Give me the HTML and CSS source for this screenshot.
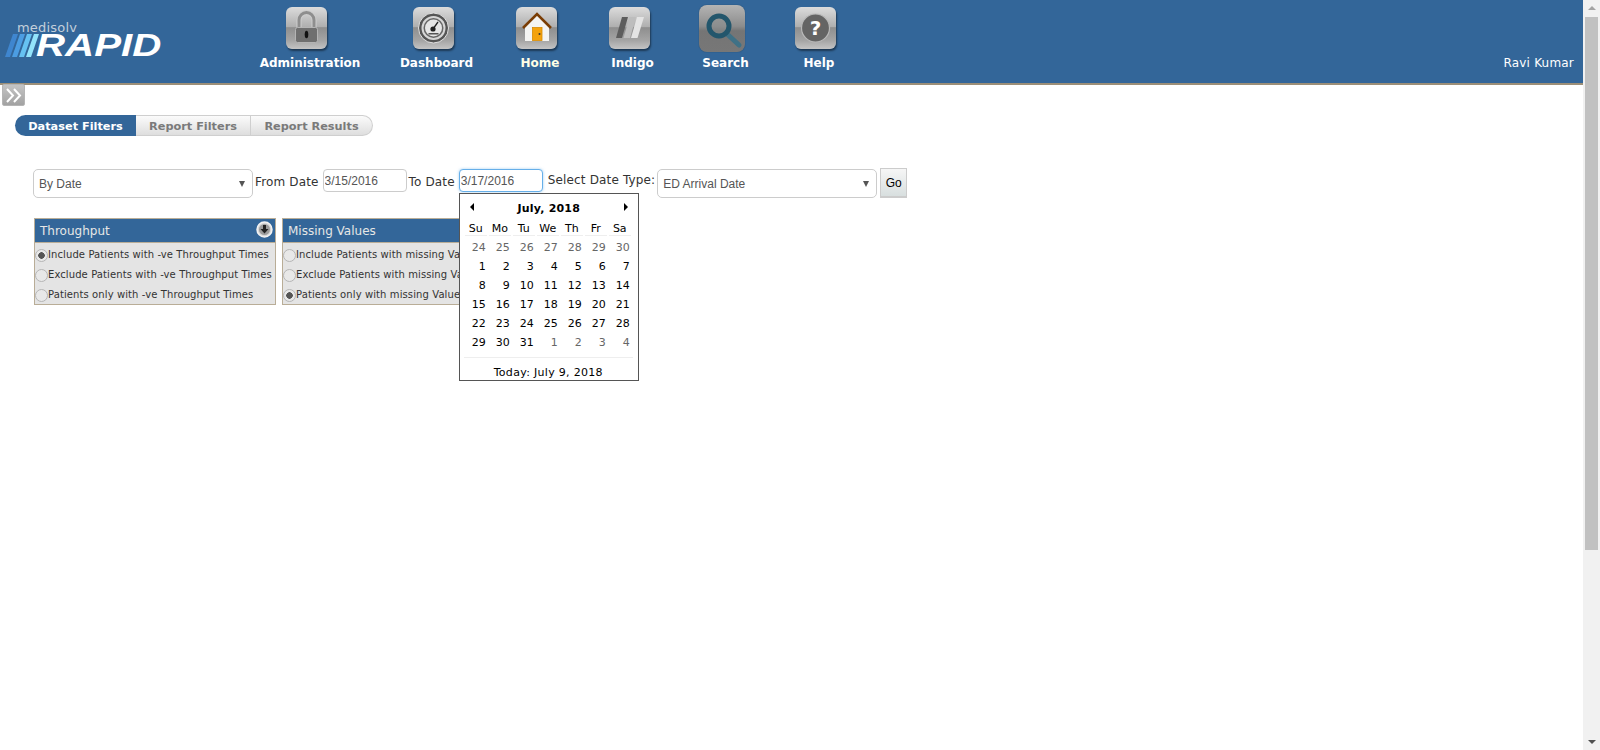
FILE: index.html
```html
<!DOCTYPE html>
<html lang="en">
<head>
    <meta charset="UTF-8">
    <title>Medisolv RAPID</title>
    <link rel="stylesheet" href="styles.css">
</head>
<body>
<div class="page">
    <div class="main">
        <header class="top-bar">
            <div class="logo">
                <span class="logo-small">medisolv</span>
                <div class="logo-mark">
                    <svg class="logo-stripes" width="34" height="23" viewBox="0 0 34 23">
                        <polygon points="8,0 13,0 5,23 0,23" fill="#3f86cf"/>
                        <polygon points="15,0 20,0 12,23 7,23" fill="#4c9de2"/>
                        <polygon points="22,0 27,0 19,23 14,23" fill="#66c2f2"/>
                        <polygon points="29,0 34,0 26,23 21,23" fill="#93e4fb"/>
                    </svg>
                    <span class="logo-big">RAPID</span>
                </div>
            </div>
            <nav class="nav">
                <a class="nav-item">
                    <span class="tile">
                        <svg width="41" height="42" viewBox="0 0 41 42">
                            <path d="M13 21 V13 a7.5 7.5 0 0 1 15 0 V21" fill="none" stroke="#cdcdcd" stroke-width="5"/>
                            <path d="M13 21 V13 a7.5 7.5 0 0 1 15 0 V21" fill="none" stroke="#8e8e8e" stroke-width="3"/>
                            <rect x="9.5" y="20.5" width="22" height="15" rx="2" fill="#6f6f6f" stroke="#b4b4b4"/>
                            <ellipse cx="20.5" cy="27.5" rx="1.8" ry="3.8" fill="#111"/>
                        </svg>
                    </span>
                    <span class="nav-label">Administration</span>
                </a>
                <a class="nav-item">
                    <span class="tile">
                        <svg width="41" height="42" viewBox="0 0 41 42">
                            <circle cx="20.5" cy="21" r="15" fill="#555" stroke="#e2e2e2" stroke-width="1"/>
                            <circle cx="20.5" cy="21" r="12" fill="#d6d6d6"/>
                            <circle cx="20.5" cy="21" r="10" fill="#666"/>
                            <circle cx="20.5" cy="21" r="8.5" fill="#e6e6e6"/>
                            <path d="M20 22 L25 15" stroke="#222" stroke-width="1.3"/>
                            <circle cx="20" cy="22" r="2.6" fill="#222"/>
                            <rect x="15.5" y="26" width="10" height="1.5" fill="#555"/>
                        </svg>
                    </span>
                    <span class="nav-label">Dashboard</span>
                </a>
                <a class="nav-item nav-home">
                    <span class="tile">
                        <svg width="41" height="42" viewBox="0 0 41 42">
                            <path d="M9 20 L21 8 L33 20 V34 H9 Z" fill="#f4f4f2"/>
                            <path d="M7 21 L21 7 L35 21" fill="none" stroke="#7a3d05" stroke-width="2.6"/>
                            <rect x="16.5" y="20.5" width="9.5" height="13" fill="#f4a20c" stroke="#d88a00" stroke-width="0.8"/>
                            <circle cx="23.5" cy="27" r="1" fill="#333"/>
                        </svg>
                    </span>
                    <span class="nav-label">Home</span>
                </a>
                <a class="nav-item">
                    <span class="tile">
                        <svg width="41" height="42" viewBox="0 0 41 42">
                            <polygon points="13,10 19,10 13,31 7,31" fill="#5d5d5d"/>
                            <polygon points="20.5,10 27,10 21,31 14.5,31" fill="#bdbdbd"/>
                            <polygon points="28,10 35,10 28.5,31 22,31" fill="#e4e4e4"/>
                        </svg>
                    </span>
                    <span class="nav-label">Indigo</span>
                </a>
                <a class="nav-item">
                    <span class="tile tile-active">
                        <svg width="46" height="47" viewBox="0 0 46 47">
                            <path d="M27 28 L40 40" stroke="#3f7186" stroke-width="5" stroke-linecap="round"/>
                            <circle cx="20" cy="21" r="10" fill="#8a8f90" fill-opacity="0.5" stroke="#23566c" stroke-width="5"/>
                        </svg>
                    </span>
                    <span class="nav-label">Search</span>
                </a>
                <a class="nav-item">
                    <span class="tile">
                        <svg class="help-ring" width="41" height="42" viewBox="0 0 41 42">
                            <circle cx="20.5" cy="21" r="14" fill="#646464" stroke="#b9b9b9" stroke-width="1.2"/>
                        </svg>
                        <span class="help-mark">?</span>
                    </span>
                    <span class="nav-label">Help</span>
                </a>
            </nav>
            <div class="user-name">Ravi Kumar</div>
        </header>

        <button class="expand-btn" type="button">
            <svg width="19" height="17" viewBox="0 0 19 17">
                <path d="M2 2 L8 8.5 L2 15 M9 2 L15 8.5 L9 15" fill="none" stroke="#fff" stroke-width="2"/>
            </svg>
        </button>

        <div class="tabs">
            <div class="tab tab-active">Dataset Filters</div>
            <div class="tab tab-mid">Report Filters</div>
            <div class="tab tab-last">Report Results</div>
        </div>

        <div class="filter-row">
            <div class="select-box select-first"><select><option>By Date</option></select></div>
            <label class="filter-label label-from">From Date</label>
            <input class="date-input" type="text" value="3/15/2016">
            <label class="filter-label label-to">To Date</label>
            <div class="date-wrap">
                <input class="date-input date-focus" type="text" value="3/17/2016">
                <div class="calendar">
                    <div class="cal-title">
                        <span class="cal-prev"></span>
                        <b>July, 2018</b>
                        <span class="cal-next"></span>
                    </div>
                    <div class="cal-grid" id="calGrid"></div>
                    <div class="cal-today">Today: July 9, 2018</div>
                </div>
            </div>
            <label class="filter-label label-type">Select Date Type:</label>
            <div class="select-box select-type"><select><option>ED Arrival Date</option></select></div>
            <button class="go-btn" type="button">Go</button>
        </div>

        <div class="panels">
            <div class="panel">
                <div class="panel-head">
                    <span>Throughput</span>
                    <svg class="panel-toggle" width="17" height="17" viewBox="0 0 17 17">
                        <circle cx="8.5" cy="8.5" r="7.5" fill="#d8d8d8" stroke="#f2f2f2" stroke-width="1.5"/>
                        <circle cx="8.5" cy="8.5" r="5.5" fill="#9c9c9c"/>
                        <path d="M7 4 H10 V8 H12.5 L8.5 12.5 L4.5 8 H7 Z" fill="#222"/>
                    </svg>
                </div>
                <label class="panel-row"><input type="radio" name="tp" checked>Include Patients with -ve Throughput Times</label>
                <label class="panel-row"><input type="radio" name="tp">Exclude Patients with -ve Throughput Times</label>
                <label class="panel-row"><input type="radio" name="tp">Patients only with -ve Throughput Times</label>
            </div>
            <div class="panel">
                <div class="panel-head"><span>Missing Values</span></div>
                <label class="panel-row"><input type="radio" name="mv">Include Patients with missing Values</label>
                <label class="panel-row"><input type="radio" name="mv">Exclude Patients with missing Values</label>
                <label class="panel-row"><input type="radio" name="mv" checked>Patients only with missing Values</label>
            </div>
        </div>
    </div>

    <div class="scrollbar">
        <span class="arrow-up"></span>
        <div class="scroll-track"><div class="scroll-thumb"></div></div>
        <span class="arrow-down"></span>
    </div>
</div>

<script>
    // Fill in the July 2018 date picker
    const calGrid = document.getElementById("calGrid");
    const dayNames = ["Su", "Mo", "Tu", "We", "Th", "Fr", "Sa"];
    const days = [24, 25, 26, 27, 28, 29, 30];
    for (let d = 1; d <= 31; d++) days.push(d);
    for (let d = 1; d <= 4; d++) days.push(d);

    dayNames.forEach(function (name) {
        const cell = document.createElement("div");
        cell.className = "cal-head";
        cell.textContent = name;
        calGrid.appendChild(cell);
    });

    days.forEach(function (day, i) {
        const cell = document.createElement("div");
        const otherMonth = i < 7 || i > 37;
        cell.className = otherMonth ? "cal-day cal-other" : "cal-day";
        cell.textContent = day;
        calGrid.appendChild(cell);
    });
</script>
</body>
</html>
```

FILE: styles.css
```css
body {
    margin: 0;
    font-family: "DejaVu Sans", Verdana, sans-serif;
    font-size: 12px;
    color: #333;
    background-color: #fff;
    overflow: hidden;
}
.page {
    display: flex;
    height: 750px;
}
.main {
    flex: 1;
    min-width: 0;
}

/* top bar */
.top-bar {
    display: flex;
    height: 83px;
    background-color: #336699;
    border-bottom: 2px solid #9c8f78;
}
.logo {
    width: 250px;
    flex: none;
    padding: 20px 0 0 5px;
    box-sizing: border-box;
}
.logo-small {
    display: block;
    margin-left: 12px;
    height: 13px;
    padding-top: 1px;
    line-height: 14px;
    font-size: 13px;
    letter-spacing: 0.2px;
    color: #c3cfdb;
}
.logo-mark {
    display: flex;
    align-items: center;
    height: 23px;
}
.logo-stripes {
    flex: none;
}
.logo-big {
    display: inline-block;
    margin-left: -3px;
    font-family: "Liberation Sans", Arial, sans-serif;
    font-weight: bold;
    font-style: italic;
    font-size: 31px;
    line-height: 23px;
    color: #fff;
    transform: scaleX(1.3);
    transform-origin: left center;
}
.nav {
    display: grid;
    grid-template-columns: 120px 133px 74px 111px 75px 112px;
    flex: none;
}
.nav-item {
    display: flex;
    flex-direction: column;
    align-items: center;
}
.tile {
    position: relative;
    display: block;
    width: 41px;
    height: 42px;
    margin: 7px 7px 0 0;
    border-radius: 6px;
    background: linear-gradient(to bottom, #dcdcdc 0%, #aeaeae 48%, #8e8e8e 49%, #a5a5a5 80%, #c4c4c4 100%);
    box-shadow: 1px 2px 2px rgba(0, 0, 0, 0.45);
}
.tile svg {
    display: block;
}
.tile-active {
    width: 46px;
    height: 47px;
    margin-top: 5px;
    margin-bottom: -3px;
    margin-right: 7px;
    border-radius: 8px;
    background: linear-gradient(to bottom, #b4b4b4 0%, #8d8d8d 45%, #757575 55%, #777 100%);
    box-shadow: 0 0 1px rgba(20, 40, 60, 0.8);
}
.help-mark {
    position: absolute;
    left: 0;
    right: 0;
    top: 7px;
    text-align: center;
    font-size: 20px;
    line-height: 28px;
    font-weight: bold;
    color: #fff;
}
.nav-label {
    margin-top: 7px;
    font-size: 12px;
    line-height: 14px;
    font-weight: bold;
    color: #fff;
    white-space: nowrap;
}
.nav-home .nav-label {
    color: #ffffe6;
}
.user-name {
    margin-left: auto;
    padding: 56px 9px 0 0;
    line-height: 14px;
    letter-spacing: 0.2px;
    color: #fff;
}

/* expand button */
.expand-btn {
    display: block;
    width: 23px;
    height: 22px;
    margin: -1px 0 0 2px;
    padding: 2px;
    border: 1px solid #b5b5b5;
    border-radius: 2px;
    background: linear-gradient(to bottom, #c4c4c4, #a2a2a2);
    position: relative;
}
.expand-btn svg {
    display: block;
}

/* tabs */
.tabs {
    display: flex;
    margin: 9px 0 0 15px;
    height: 21px;
    font-size: 11.3px;
    font-weight: bold;
}
.tab {
    box-sizing: border-box;
    text-align: center;
    color: #7a7a7a;
    background: linear-gradient(to bottom, #fbfbfb, #dedede);
    border: 1px solid #cfcfcf;
    border-left: none;
    line-height: 21px;
}
.tab-active {
    width: 121px;
    color: #fff;
    background: #336699;
    border: none;
    border-radius: 11px 0 0 11px;
    line-height: 23px;
}
.tab-mid {
    width: 115px;
}
.tab-last {
    width: 122px;
    border-radius: 0 11px 11px 0;
}

/* filter row */
.filter-row {
    display: flex;
    align-items: flex-start;
    margin: 32px 0 0 33px;
}
.select-box {
    position: relative;
    margin-top: 1px;
}
.select-box::after {
    content: "";
    position: absolute;
    right: 8px;
    top: 12px;
    border-left: 3px solid transparent;
    border-right: 3px solid transparent;
    border-top: 6px solid #555;
}
.select-box select {
    display: block;
    width: 100%;
    height: 29px;
    padding: 1px 0 0 5px;
    border: 1px solid #ccc;
    border-radius: 5px;
    background: #fff;
    appearance: none;
    font-family: "Liberation Sans", Arial, sans-serif;
    font-size: 12px;
    color: #555;
}
.select-first {
    width: 220px;
}
.select-type {
    width: 220px;
    margin-left: 2px;
}
.filter-label {
    line-height: 14px;
    letter-spacing: 0.15px;
    color: #333;
    white-space: nowrap;
}
.label-from {
    margin: 7px 4px 0 2px;
}
.label-to {
    margin: 7px 4px 0 2px;
}
.label-type {
    margin: 5px 0 0 5px;
}
.date-input {
    display: block;
    width: 84px;
    height: 23px;
    box-sizing: border-box;
    margin-top: 1px;
    padding: 0 0 0 1px;
    border: 1px solid #ccc;
    border-radius: 4px;
    font-family: "Liberation Sans", Arial, sans-serif;
    font-size: 12px;
    color: #555;
}
.date-focus {
    border-color: #66afe9;
    box-shadow: 0 0 3px rgba(102, 175, 233, 0.6);
    outline: none;
}
.date-wrap {
    position: relative;
}
.go-btn {
    width: 27px;
    height: 30px;
    margin-left: 3px;
    padding: 0;
    border: 1px solid #ccc;
    border-bottom: 2px solid #ccc;
    background: linear-gradient(to bottom, #f6f6f6, #d8dfdf);
    font-family: "Liberation Sans", Arial, sans-serif;
    font-size: 12px;
    color: #000;
}

/* date picker */
.calendar {
    position: absolute;
    left: 0;
    top: 25px;
    z-index: 5;
    width: 180px;
    height: 188px;
    box-sizing: border-box;
    padding: 0 5px;
    background-color: #fff;
    border: 1px solid #555;
    font-size: 11px;
    color: #000;
}
.cal-title {
    display: flex;
    justify-content: space-between;
    align-items: flex-start;
    height: 27px;
    padding: 8px 5px 0 5px;
    box-sizing: border-box;
    line-height: 14px;
}
.cal-title b {
    letter-spacing: 0.2px;
}
.cal-prev, .cal-next {
    margin-top: 1px;
    border-top: 4px solid transparent;
    border-bottom: 4px solid transparent;
}
.cal-prev {
    border-right: 4px solid #000;
}
.cal-next {
    border-left: 4px solid #000;
}
.cal-grid {
    display: grid;
    grid-template-columns: repeat(7, 22px);
    grid-template-rows: 17px;
    grid-auto-rows: 19px;
    column-gap: 2px;
}
.cal-head {
    text-align: center;
    padding-top: 1px;
    line-height: 13px;
    height: 13px;
    border-bottom: 1px solid #eee;
}
.cal-day {
    text-align: right;
    padding-right: 1px;
    line-height: 19px;
}
.cal-other {
    color: #666;
}
.cal-today {
    margin: 5px 0 0 -1px;
    padding-top: 7px;
    border-top: 1px solid #eee;
    text-align: center;
    line-height: 16px;
    letter-spacing: 0.3px;
}

/* option panels */
.panels {
    display: flex;
    gap: 6px;
    margin: 20px 0 0 34px;
}
.panel {
    width: 242px;
    height: 87px;
    box-sizing: border-box;
    background-color: #e4e4e4;
    border: 1px solid #b9ad97;
    overflow: hidden;
}
.panel-head {
    display: flex;
    justify-content: space-between;
    height: 24px;
    padding: 0 2px 0 5px;
    box-sizing: border-box;
    background-color: #336699;
    border-bottom: 1px solid #b9ad97;
    color: #e6e6e6;
    line-height: 24px;
}
.panel-toggle {
    margin-top: 2px;
}
.panel-row {
    display: flex;
    align-items: flex-start;
    height: 20px;
    font-size: 10px;
    line-height: 23px;
    letter-spacing: 0.1px;
    color: #333;
    white-space: nowrap;
}
.panel-row input {
    appearance: none;
    flex: none;
    width: 13px;
    height: 13px;
    margin: 6px 0 0 0;
    border: 1px solid #b5b5b5;
    border-radius: 50%;
    background: #e8e8e8;
    box-sizing: border-box;
}
.panel-row input:checked {
    background: radial-gradient(circle, #555 0, #555 3px, #e8e8e8 3.5px);
}

/* page scrollbar */
.scrollbar {
    display: flex;
    flex-direction: column;
    align-items: center;
    width: 17px;
    flex: none;
    background-color: #f1f1f1;
}
.arrow-up, .arrow-down {
    flex: none;
    width: 0;
    height: 0;
    border-left: 4px solid transparent;
    border-right: 4px solid transparent;
}
.arrow-up {
    margin: 6px 0 7px;
    border-bottom: 4px solid #a3a3a3;
}
.arrow-down {
    margin: 6px 0 6px;
    border-top: 4px solid #505050;
}
.scroll-track {
    flex: 1;
    width: 13px;
}
.scroll-thumb {
    height: 533px;
    background-color: #c1c1c1;
}
```
